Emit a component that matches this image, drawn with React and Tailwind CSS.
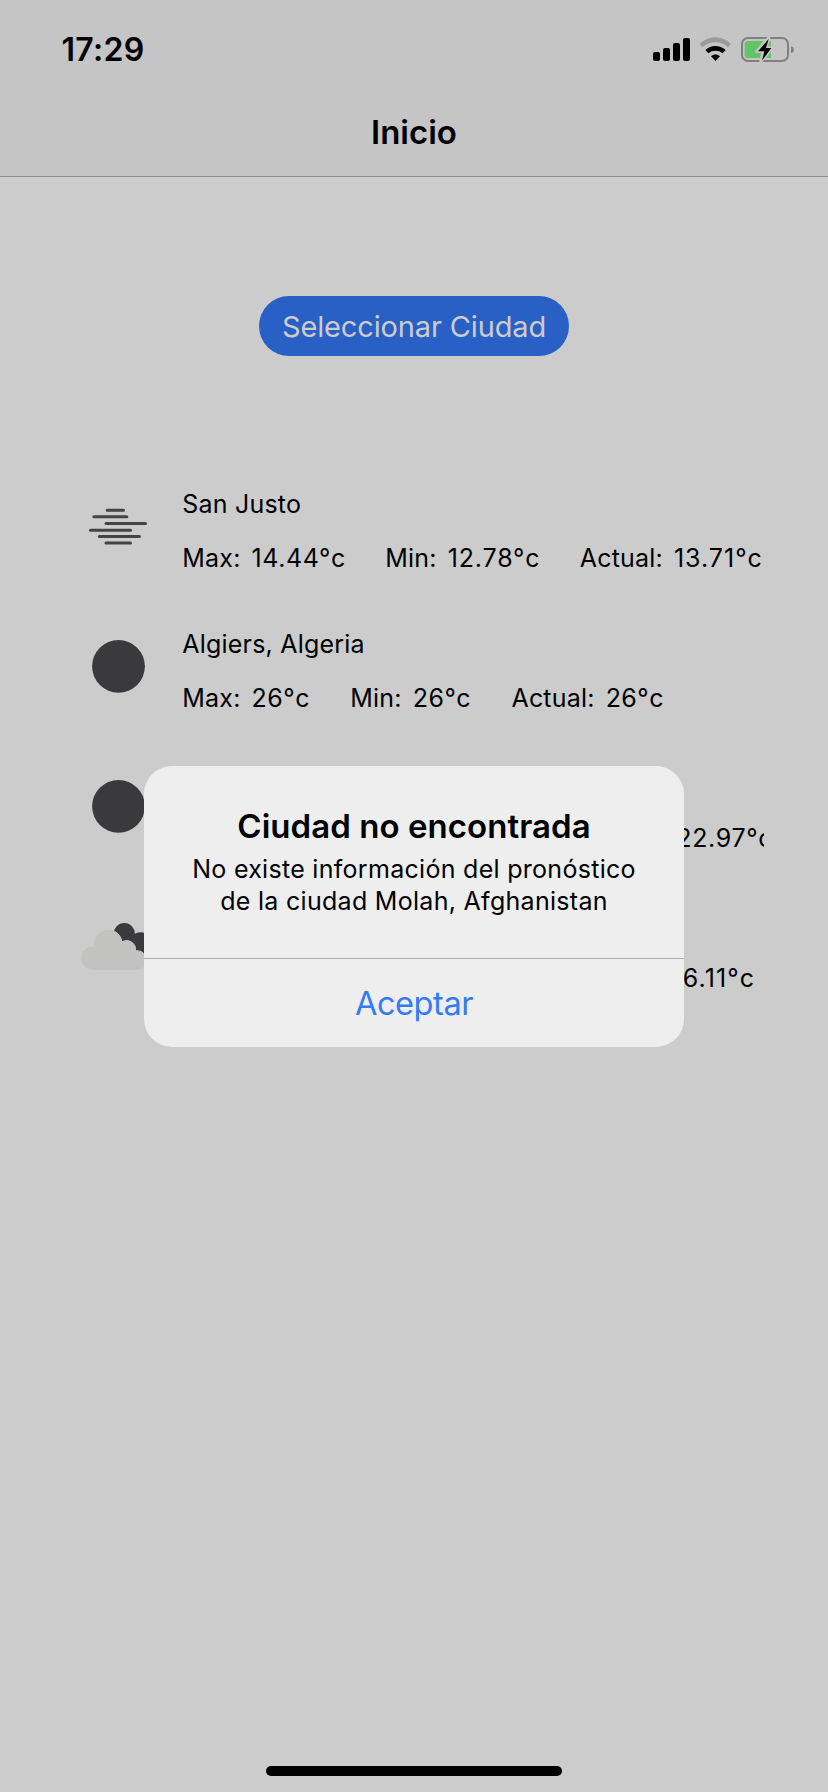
function StatusIcons() {
  return (
    <svg className="h-[60px] w-[180px]" viewBox="0 0 540 180" aria-hidden="true">
      <g fill="#000">
        <rect x="69" y="96" width="21" height="27" rx="6" />
        <rect x="99" y="84" width="21" height="39" rx="6" />
        <rect x="129" y="69" width="21" height="54" rx="6" />
        <rect x="159" y="54" width="21" height="69" rx="6" />
      </g>
      <path d="M209 71 C235 45 277 45 303 71 L294 82 C273 62 239 62 218 82 Z" fill="#9b9b9b" />
      <path d="M226 90 C243 74 269 74 287 90 L278 100 C266 90 247 90 235 100 Z" fill="#000" />
      <path d="M243 109 C251 102 262 102 270 109 L256.500 123 Z" fill="#000" />
      <rect x="336" y="54" width="138" height="69" rx="18" fill="none" stroke="#808080" strokeWidth="6" />
      <path d="M354 63 H423 V114 H354 Q344 114 344 104 V73 Q344 63 354 63 Z" fill="#62c466" />
      <path d="M483 78 Q492 82 492 89 Q492 96 483 100 Z" fill="#808080" />
      <path d="M416 54 L381 94 H400 L393 124 L426 84 H408 Z" fill="#000" stroke="#c5c5c5" strokeWidth="10" strokeLinejoin="round" />
      <path d="M416 57 L384 94 H403 L396 122 L424 84 H408 Z" fill="#000" />
    </svg>
  );
}

function FogIcon() {
  return (
    <svg className="size-[100px]" viewBox="0 0 100 100" aria-hidden="true">
      <g stroke="#444446" strokeWidth="3" strokeLinecap="round">
        <path d="M39.200 34.200 H55.500" />
        <path d="M25.800 40.800 H58.800" />
        <path d="M38 47.500 H77.500" />
        <path d="M22.500 54.200 H62.500" />
        <path d="M31.300 60.600 H71.300" />
        <path d="M38 66.900 H62.500" />
      </g>
    </svg>
  );
}

function MoonIcon() {
  return (
    <svg className="size-[100px]" viewBox="0 0 100 100" aria-hidden="true">
      <circle cx="50.500" cy="50.300" r="26.400" fill="#3a3a3c" />
    </svg>
  );
}

function CloudsIcon() {
  return (
    <svg className="size-[100px]" viewBox="0 0 100 100" aria-hidden="true">
      <g fill="#3a3a3c">
        <circle cx="56.300" cy="37.700" r="10.600" />
        <circle cx="72.500" cy="48.300" r="12" />
        <circle cx="84" cy="56" r="10" />
        <rect x="56" y="44" width="26" height="20" />
      </g>
      <g fill="#c2c2c0">
        <circle cx="25" cy="62" r="11.800" />
        <circle cx="40.300" cy="48" r="14" />
        <circle cx="58.700" cy="53.500" r="9" />
        <circle cx="68.700" cy="64.300" r="9.600" />
        <path d="M25 50.200 H52 L62 58 L68 56 V73.900 H25 Z" />
      </g>
      <path d="M46.500 35.300 A14.200 14.200 0 0 1 53.800 46 A9 9 0 0 1 67.500 54.800 A9.600 9.600 0 0 1 77.500 60.500" fill="none" stroke="#cacac8" strokeWidth="1" />
    </svg>
  );
}

const CITIES = [
  {
    name: 'San Justo',
    Icon: FogIcon,
    gap: 'gap-[39.300px]',
    temps: [
      ['Max:', '14.44°c', 'tracking-[0.6px]'],
      ['Min:', '12.78°c', 'tracking-[0.85px]'],
      ['Actual:', '13.71°c', 'tracking-[1px]'],
    ],
  },
  {
    name: 'Algiers, Algeria',
    Icon: MoonIcon,
    gap: 'gap-[40.300px]',
    temps: [
      ['Max:', '26°c', 'tracking-[0.5px]'],
      ['Min:', '26°c', 'tracking-[0.5px]'],
      ['Actual:', '26°c', 'tracking-[0.5px]'],
    ],
  },
  { Icon: MoonIcon, current: '22.97°c', offset: 'pl-[494px] tracking-[0.65px]' },
  { Icon: CloudsIcon, current: '6.11°c', offset: 'pl-[500.500px] tracking-[1.1px]' },
];

function CityRow({ name, Icon, gap, temps, current, offset }) {
  return (
    <li className="flex h-[140px] items-start pl-[68px]">
      <Icon />
      <div className="ml-[14.300px] flex w-[581.700px] flex-col overflow-hidden pt-3 text-[25px] leading-8 tracking-[0.2px] whitespace-nowrap">
        <p className="h-8">{name}</p>
        {temps ? (
          <div className={`mt-[22px] flex ${gap}`}>
            {temps.map(([label, value, tracking]) => (
              <p key={label} className="flex gap-[11px]">
                <span>{label}</span>
                <span className={tracking}>{value}</span>
              </p>
            ))}
          </div>
        ) : (
          <p className={`mt-[22px] ${offset}`}>{current}</p>
        )}
      </div>
    </li>
  );
}

function Alert() {
  return (
    <div role="alertdialog" className="absolute top-[766px] left-[144px] flex h-[281px] w-[540px] flex-col overflow-hidden rounded-[28px] bg-[#eeeeee] text-center whitespace-nowrap">
      <div className="flex h-[193px] flex-col border-b border-[#b0b0b0] pt-10">
        <h2 className="text-[33px] leading-10 font-semibold tracking-[0.05px]">Ciudad no encontrada</h2>
        <p className="mt-[7px] text-[25px] leading-8 tracking-[0.29px]">
          No existe información del pronóstico
          <br />
          de la ciudad Molah, Afghanistan
        </p>
      </div>
      <button className="flex flex-1 items-center justify-center pt-px text-[32.500px] leading-10 tracking-[-0.450px] text-[#347bf6]">
        Aceptar
      </button>
    </div>
  );
}

export default function App() {
  return (
    <div className="relative flex h-[1792px] w-[828px] flex-col overflow-hidden bg-[#cccccc] font-['Inter',sans-serif] text-black">
      <header className="flex h-[177px] flex-col border-b border-[#8e8e8e] bg-[#c5c5c5]">
        <div className="flex h-20 items-start justify-between pt-5 pr-[18px] pl-[61.500px]">
          <time className="pt-[10px] text-[32px] leading-10 font-semibold tracking-[0.3px]">17:29</time>
          <StatusIcons />
        </div>
        <h1 className="mt-8 text-center text-[33px] leading-10 font-semibold">Inicio</h1>
      </header>
      <main className="flex flex-1 flex-col">
        <button className="mt-[119px] flex h-[60px] w-[310px] items-center justify-center self-center rounded-full bg-[#2860c5] pt-px text-[29px] leading-9 tracking-[-0.140px] whitespace-nowrap text-[#cccccc]">
          Seleccionar Ciudad
        </button>
        <ul className="mt-[120px] flex flex-col">
          {CITIES.map((city, i) => (
            <CityRow key={i} {...city} />
          ))}
        </ul>
      </main>
      <div className="mb-4 h-[10px] w-[296px] self-center rounded-full bg-black" />
      <Alert />
    </div>
  );
}
